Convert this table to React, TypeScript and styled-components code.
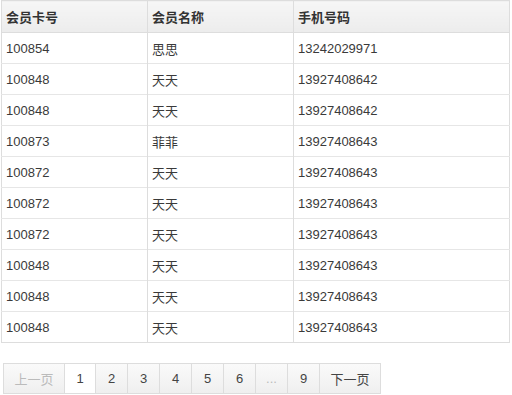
import React from 'react';
import styled, { createGlobalStyle } from 'styled-components';

const GlobalStyle = createGlobalStyle`
  body {
    margin: 0;
    background: #fff;
    font-family: "Liberation Sans", "Noto Sans CJK SC", sans-serif;
    color: #333;
  }
`;

const Wrapper = styled.div`
  width: 512px;
  padding: 0 2px 0 1px;
  box-sizing: border-box;
`;

const Table = styled.table`
  width: 509px;
  border-collapse: collapse;
  border: 1px solid #ddd;
  font-size: 13px;
`;

const HeadCell = styled.th`
  height: 31px;
  padding: 0 4px;
  text-align: left;
  font-weight: bold;
  color: #333;
  background: linear-gradient(#f6f6f6, #ececec);
  border-left: 1px solid #ddd;
  border-bottom: 1px solid #ddd;
  &:first-child {
    border-left: none;
  }
`;

const Cell = styled.td<{ $w?: number }>`
  height: 30px;
  padding: 0 4px;
  color: #3a3a3a;
  border-left: 1px solid #ddd;
  border-top: 1px solid #e6e6e6;
  width: ${(p) => (p.$w ? `${p.$w}px` : 'auto')};
  &:first-child {
    border-left: none;
  }
`;

const Pager = styled.div`
  display: flex;
  margin: 20px 0 0 2px;
`;

const PageButton = styled.div<{ $wide?: boolean; $active?: boolean; $disabled?: boolean }>`
  height: 29px;
  width: ${(p) => (p.$wide ? '60px' : p.$active ? '30px' : '31px')};
  display: flex;
  align-items: center;
  justify-content: center;
  font-size: 13px;
  color: ${(p) => (p.$disabled ? '#bbb' : '#444')};
  background: ${(p) => (p.$active ? '#fff' : 'linear-gradient(#fafafa, #efefef)')};
  border: 1px solid #ddd;
  margin-left: -1px;
  box-sizing: content-box;
  &:first-child {
    margin-left: 0;
  }
`;

const rows = [
  ['100854', '思思', '13242029971'],
  ['100848', '天天', '13927408642'],
  ['100848', '天天', '13927408642'],
  ['100873', '菲菲', '13927408643'],
  ['100872', '天天', '13927408643'],
  ['100872', '天天', '13927408643'],
  ['100872', '天天', '13927408643'],
  ['100848', '天天', '13927408643'],
  ['100848', '天天', '13927408643'],
  ['100848', '天天', '13927408643'],
];

export default function App() {
  return (
    <Wrapper>
      <GlobalStyle />
      <Table>
        <thead>
          <tr>
            <HeadCell>会员卡号</HeadCell>
            <HeadCell>会员名称</HeadCell>
            <HeadCell>手机号码</HeadCell>
          </tr>
        </thead>
        <tbody>
          {rows.map((r, i) => (
            <tr key={i}>
              <Cell $w={137}>{r[0]}</Cell>
              <Cell $w={137}>{r[1]}</Cell>
              <Cell>{r[2]}</Cell>
            </tr>
          ))}
        </tbody>
      </Table>
      <Pager>
        <PageButton $wide $disabled>上一页</PageButton>
        <PageButton $active>1</PageButton>
        <PageButton>2</PageButton>
        <PageButton>3</PageButton>
        <PageButton>4</PageButton>
        <PageButton>5</PageButton>
        <PageButton>6</PageButton>
        <PageButton $disabled>...</PageButton>
        <PageButton>9</PageButton>
        <PageButton $wide>下一页</PageButton>
      </Pager>
    </Wrapper>
  );
}
